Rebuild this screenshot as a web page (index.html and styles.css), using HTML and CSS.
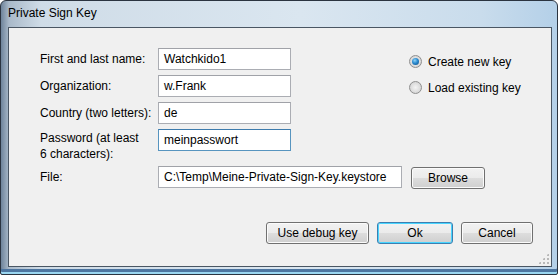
FILE: index.html
```html
<!DOCTYPE html>
<html lang="en">

<head>
    <meta charset="UTF-8">
    <title>Private Sign Key</title>
    <link rel="stylesheet" href="styles.css">
</head>

<body>
    <div class="window">
        <div class="titlebar">Private Sign Key</div>
        <div class="client">
            <div class="top">
                <div class="form">
                    <div class="row">
                        <label class="label">First and last name:</label>
                        <div class="textbox">Watchkido1</div>
                    </div>
                    <div class="row">
                        <label class="label">Organization:</label>
                        <div class="textbox">w.Frank</div>
                    </div>
                    <div class="row">
                        <label class="label">Country (two letters):</label>
                        <div class="textbox">de</div>
                    </div>
                    <div class="row">
                        <label class="label two-line">Password (at least<br>6 characters):</label>
                        <div class="textbox focused">meinpasswort</div>
                    </div>
                </div>
                <div class="options">
                    <div class="radio-row">
                        <span class="radio checked"></span>
                        <span>Create new key</span>
                    </div>
                    <div class="radio-row">
                        <span class="radio"></span>
                        <span>Load existing key</span>
                    </div>
                </div>
            </div>
            <div class="row file-row">
                <label class="label">File:</label>
                <div class="textbox wide">C:\Temp\Meine-Private-Sign-Key.keystore</div>
                <div class="button browse">Browse</div>
            </div>
            <div class="actions">
                <div class="button debug">Use debug key</div>
                <div class="button default">Ok</div>
                <div class="button cancel">Cancel</div>
            </div>
            <div class="grip"></div>
        </div>
    </div>
</body>

</html>
```

FILE: styles.css
```css
/* Vista style dialog */
body {
    margin: 0;
    padding: 0;
    font-family: "Liberation Sans", Arial, sans-serif;
    font-size: 12px;
    color: #000;
    background: #fff;
}

.window {
    width: 556px;
    height: 273px;
    border: 1px solid #2b3440;
    border-radius: 6px 6px 2px 2px;
    background: linear-gradient(90deg, #6f849b 0px, #a9b9c9 8px, #cfdce7 40px, #dae6f0 300px, #c9dcec 480px, #b4d0e8 556px);
    display: flex;
    flex-direction: column;
    box-shadow: inset 0 -2px 0 #9ad6f0, inset 0 -5px 0 #4d75a0;
}

.titlebar {
    height: 26px;
    line-height: 25px;
    padding-left: 7px;
    font-size: 12px;
}

.client {
    position: relative;
    margin: 0 5px 0 7px;
    height: 238px;
    border: 1px solid #4a5663;
    background: #f0f0f0;
    display: flex;
    flex-direction: column;
}

.top {
    display: flex;
    padding-top: 20px;
}

.form {
    display: flex;
    flex-direction: column;
    gap: 5px;
    padding-left: 31px;
}

.row {
    display: flex;
    align-items: flex-start;
}

.label {
    width: 118px;
    line-height: 22px;
    white-space: nowrap;
}

.label.two-line {
    line-height: 16px;
    padding-top: 1px;
}

.textbox {
    width: 126px;
    height: 20px;
    line-height: 21px;
    padding-left: 5px;
    border: 1px solid #abadb3;
    border-top-color: #a0a2a8;
    background: #fff;
    white-space: nowrap;
    overflow: hidden;
}

.textbox.focused {
    border-color: #5794bf;
    border-top-color: #3d7bad;
}

.file-row {
    margin-top: 3px;
    padding-left: 31px;
    align-items: center;
}

.textbox.wide {
    width: 237px;
}

.button {
    height: 20px;
    line-height: 20px;
    text-align: center;
    border: 1px solid #707070;
    border-radius: 3px;
    background: linear-gradient(#f2f2f2 0%, #ebebeb 50%, #dddddd 51%, #cfcfcf 100%);
    box-shadow: inset 0 0 0 1px #fbfbfb;
}

.button.browse {
    width: 72px;
    margin-left: 9px;
    margin-top: 2px;
}

.options {
    padding-left: 118px;
    padding-top: 6px;
    display: flex;
    flex-direction: column;
    gap: 11px;
}

.radio-row {
    display: flex;
    align-items: center;
    gap: 6px;
    height: 15px;
    white-space: nowrap;
}

.radio {
    width: 11px;
    height: 11px;
    border-radius: 50%;
    border: 1px solid #8f8f8f;
    background: radial-gradient(circle, #f4f4f4 0%, #dcdcdc 60%, #c8c8c8 100%);
    position: relative;
}

.radio.checked::after {
    content: "";
    position: absolute;
    left: 2px;
    top: 2px;
    width: 7px;
    height: 7px;
    border-radius: 50%;
    background: radial-gradient(circle at 40% 35%, #8fd3f5 0%, #2a8ad0 45%, #0e4a7e 100%);
}

.actions {
    display: flex;
    justify-content: flex-end;
    gap: 8px;
    margin-top: auto;
    padding: 0 18px 22px 0;
}

.button.debug {
    width: 101px;
}

.button.default {
    width: 74px;
    border-color: #3c7fb1;
    box-shadow: inset 0 0 0 1px #48d5ff;
}

.button.cancel {
    width: 70px;
}

.grip {
    position: absolute;
    right: 2px;
    bottom: 2px;
    width: 11px;
    height: 11px;
    background-image: radial-gradient(circle, #b8b8b8 0.8px, transparent 1.2px);
    background-size: 4px 4px;
    clip-path: polygon(100% 0, 100% 100%, 0 100%);
}
```
